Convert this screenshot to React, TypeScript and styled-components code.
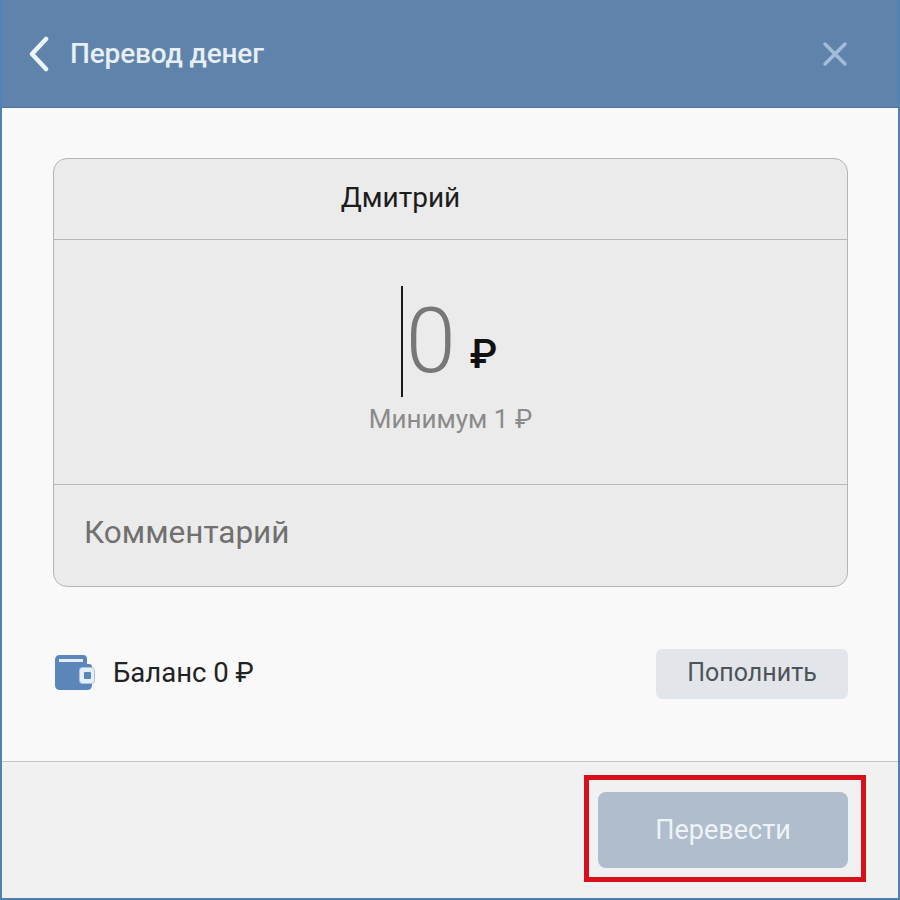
import styled, { createGlobalStyle } from 'styled-components';

const GlobalStyle = createGlobalStyle`
  html, body {
    margin: 0;
    padding: 0;
    background: #fff;
  }
  * {
    box-sizing: border-box;
  }
`;

const Window = styled.div`
  width: 900px;
  height: 900px;
  display: flex;
  flex-direction: column;
  font-family: Roboto, 'Liberation Sans', sans-serif;
  border-left: 2px solid #4f82b5;
  border-right: 2px solid #4f82b5;
  border-bottom: 2px solid #4f7fa8;
  background: #f9f9f9;
  position: relative;
`;

const Header = styled.div`
  height: 108px;
  flex-shrink: 0;
  display: flex;
  align-items: center;
  justify-content: space-between;
  padding: 0 50px 0 26px;
  background: #5f83aa;
  border-bottom: 1px solid #4f76a0;
`;

const HeaderLeft = styled.div`
  display: flex;
  align-items: center;
  gap: 20px;
`;

const Title = styled.div`
  color: #e6eff6;
  font-size: 28px;
  font-weight: 500;
  letter-spacing: -0.15px;
`;

const Body = styled.div`
  flex: 1;
  display: flex;
  flex-direction: column;
  padding: 50px 50px 0 51px;
`;

const Card = styled.div`
  height: 429px;
  display: flex;
  flex-direction: column;
  background: #ebebeb;
  border: 1px solid #b5b5b5;
  border-radius: 14px;
`;

const Recipient = styled.div`
  height: 81px;
  flex-shrink: 0;
  display: flex;
  align-items: center;
  justify-content: center;
  padding: 0 100px 4px 0;
  color: #1c1c1c;
  font-size: 28px;
  border-bottom: 1px solid #b8b8b8;
`;

const AmountSection = styled.div`
  height: 245px;
  flex-shrink: 0;
  display: flex;
  flex-direction: column;
  align-items: center;
  padding-top: 46px;
  border-bottom: 1px solid #b8b8b8;
`;

const AmountRow = styled.div`
  height: 111px;
  display: flex;
  align-items: center;
  margin-left: -3px;
`;

const Caret = styled.div`
  width: 2px;
  height: 111px;
  background: #1a1a1a;
`;

const AmountValue = styled.div`
  margin-left: 3px;
  color: #777;
  font-size: 90px;
  font-weight: 300;
  line-height: 111px;
`;

const AmountCurrency = styled.div`
  margin-left: 14px;
  margin-top: 26px;
  color: #111;
  font-size: 40px;
  font-weight: 500;
`;

const Minimum = styled.div`
  margin-top: 7px;
  color: #8a8a8a;
  font-size: 26px;
`;

const CommentSection = styled.div`
  flex: 1;
  display: flex;
  align-items: center;
  padding: 0 0 6px 30px;
  color: #707070;
  font-size: 31.5px;
`;

const BalanceRow = styled.div`
  margin-top: 62px;
  height: 50px;
  display: flex;
  align-items: center;
  justify-content: space-between;
`;

const BalanceInfo = styled.div`
  display: flex;
  align-items: center;
  gap: 18px;
  padding: 0 0 4px 2px;
`;

const BalanceText = styled.div`
  color: #222;
  font-size: 27.5px;
`;

const TopUpButton = styled.div`
  width: 192px;
  height: 50px;
  display: flex;
  align-items: center;
  justify-content: center;
  padding-bottom: 3px;
  border-radius: 6px;
  background: #e2e6ea;
  color: #4e5357;
  font-size: 25px;
`;

const Footer = styled.div`
  height: 137px;
  flex-shrink: 0;
  margin-top: auto;
  display: flex;
  justify-content: flex-end;
  padding: 30px 50px 0 0;
  background: #f1f1f1;
  border-top: 1px solid #c4c4c4;
`;

const SubmitButton = styled.div`
  width: 250px;
  height: 76px;
  display: flex;
  align-items: center;
  justify-content: center;
  border-radius: 8px;
  background: #afbdcc;
  color: #eef3f7;
  font-size: 27px;
`;

const Highlight = styled.div`
  position: absolute;
  left: 582px;
  top: 775px;
  width: 282px;
  height: 107px;
  border: 5px solid #d8101c;
  pointer-events: none;
`;

const BackIcon = () => (
  <svg width="22" height="36" viewBox="0 0 22 36" fill="none">
    <path d="M18 3 L4 18 L18 33" stroke="#eef5fa" strokeWidth="4.5" strokeLinecap="round" strokeLinejoin="round" />
  </svg>
);

const CloseIcon = () => (
  <svg width="26" height="26" viewBox="0 0 26 26" fill="none">
    <path d="M3 3 L23 23 M23 3 L3 23" stroke="#a3bdd8" strokeWidth="3.5" strokeLinecap="round" />
  </svg>
);

const WalletIcon = () => (
  <svg width="40" height="35" viewBox="0 0 40 35" fill="none">
    <path d="M5 0 H28 Q32 0 32 4 V9 H34 Q37 9 37 12 V30 Q37 35 32 35 H5 Q0 35 0 30 V5 Q0 0 5 0 Z" fill="#5a86ba" />
    <rect x="4" y="4" width="24" height="3" fill="#e4edf6" />
    <rect x="24.5" y="12.5" width="15" height="16" rx="3" fill="#e6eef6" stroke="#a9c3dd" />
    <rect x="29" y="17" width="7" height="7" rx="1" fill="#5a86ba" />
  </svg>
);

const App = () => {
  return (
    <>
      <GlobalStyle />
      <Window>
        <Header>
          <HeaderLeft>
            <BackIcon />
            <Title>Перевод денег</Title>
          </HeaderLeft>
          <CloseIcon />
        </Header>
        <Body>
          <Card>
            <Recipient>Дмитрий</Recipient>
            <AmountSection>
              <AmountRow>
                <Caret />
                <AmountValue>0</AmountValue>
                <AmountCurrency>₽</AmountCurrency>
              </AmountRow>
              <Minimum>Минимум 1 ₽</Minimum>
            </AmountSection>
            <CommentSection>Комментарий</CommentSection>
          </Card>
          <BalanceRow>
            <BalanceInfo>
              <WalletIcon />
              <BalanceText>Баланс 0 ₽</BalanceText>
            </BalanceInfo>
            <TopUpButton>Пополнить</TopUpButton>
          </BalanceRow>
        </Body>
        <Footer>
          <SubmitButton>Перевести</SubmitButton>
        </Footer>
        <Highlight />
      </Window>
    </>
  );
};

export default App;
